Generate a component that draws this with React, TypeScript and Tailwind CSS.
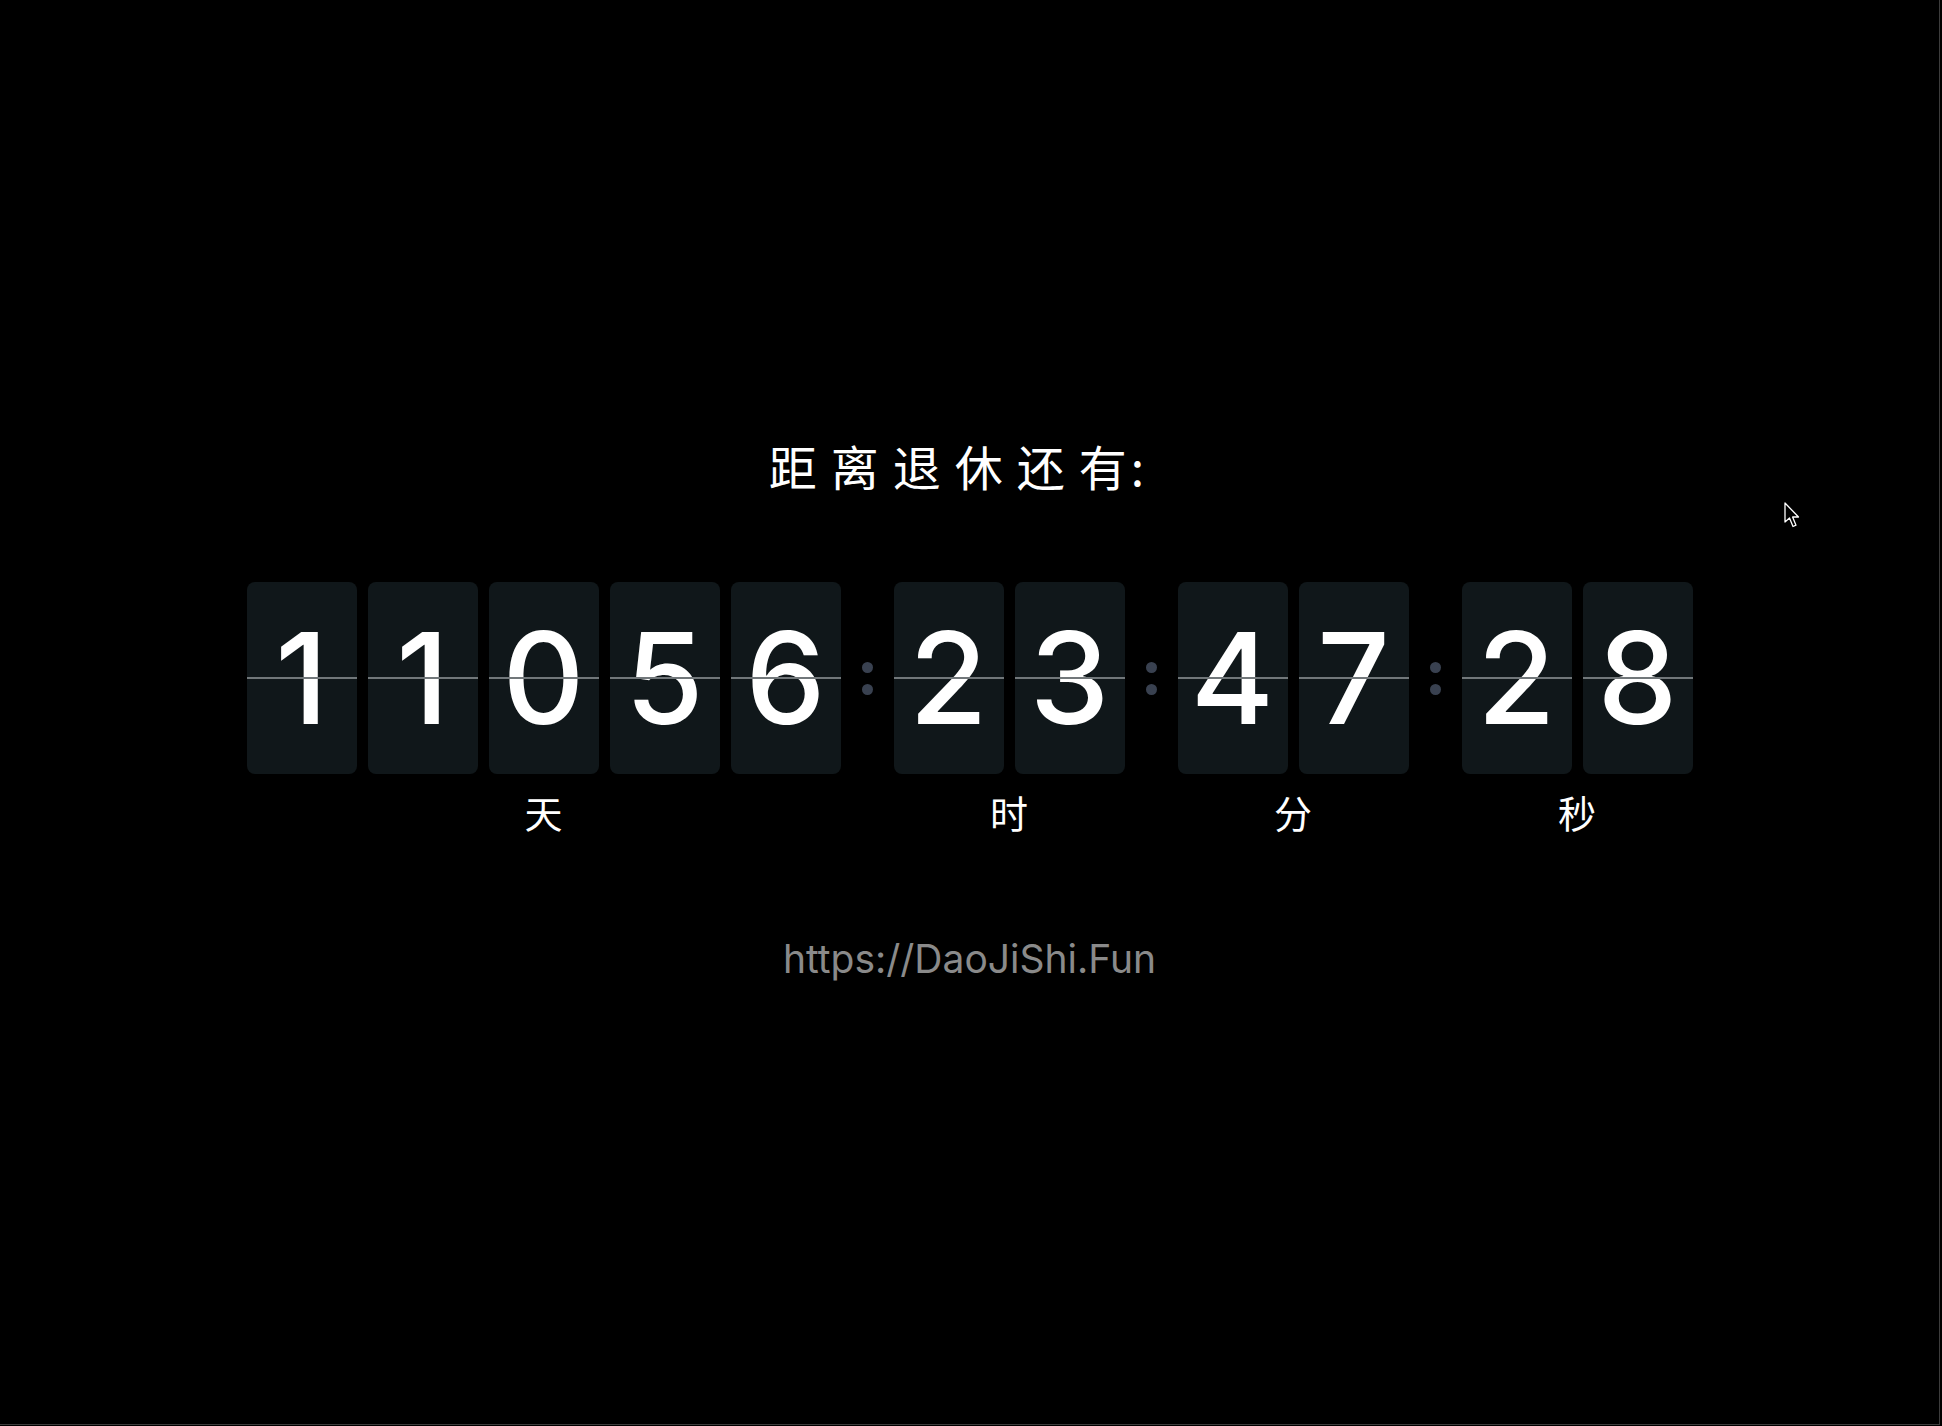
const groups = [
  { digits: ["1", "1", "0", "5", "6"], label: "天" },
  { digits: ["2", "3"], label: "时" },
  { digits: ["4", "7"], label: "分" },
  { digits: ["2", "8"], label: "秒" },
];

function FlipCard({ value }: { value: string }) {
  return (
    <div className="relative flex h-[192px] w-[110px] items-center justify-center rounded-lg bg-[#10171a]">
      <span className="font-['Inter',sans-serif] text-[127px] font-medium leading-none text-white">{value}</span>
      {/* fold line */}
      <div className="absolute left-0 right-0 top-[95px] h-[2px] bg-[#71777a]" />
    </div>
  );
}

function Colon() {
  return (
    <div className="flex h-[192px] w-[53px] flex-col items-center justify-center gap-[11px]">
      <div className="h-[11px] w-[11px] rounded-full bg-[#394150]" />
      <div className="h-[11px] w-[11px] rounded-full bg-[#394150]" />
    </div>
  );
}

function Cursor() {
  return (
    <svg className="absolute left-[1784px] top-[502px]" width="17" height="27" viewBox="0 0 17 27">
      <path d="M1 1 L1 20 L5.5 16 L9 24.5 L12 23.2 L8.6 15 L14.5 15 Z" fill="#000" stroke="#fff" strokeWidth="1.3" strokeLinejoin="round" />
    </svg>
  );
}

export default function App() {
  return (
    <div className="relative h-[1426px] w-full overflow-hidden bg-black">
      <div className="flex h-[1425px] w-[1940px] flex-col items-center border-b border-r border-[#3c3c3c] pt-[441px]">
        <h1 className="pr-[12px] font-['Noto_Sans_CJK_SC',sans-serif] text-[48px] font-normal leading-none tracking-[14px] text-white">
          距离退休还<span className="tracking-[4px]">有</span>:
        </h1>

        <div className="mt-[93px] flex items-start">
          {groups.map((g, i) => (
            <div key={g.label} className="flex items-start">
              {i > 0 && <Colon />}
              <div className="flex flex-col items-center">
                <div className="flex gap-[11px]">
                  {g.digits.map((d, j) => (
                    <FlipCard key={j} value={d} />
                  ))}
                </div>
                <div className="mt-[19px] font-['Noto_Sans_CJK_SC',sans-serif] text-[38px] leading-none text-white">
                  {g.label}
                </div>
              </div>
            </div>
          ))}
        </div>

        <div className="mt-[108px] font-['Inter',sans-serif] text-[39px] leading-none text-[#8a8a8a]">
          https://DaoJiShi.Fun
        </div>
      </div>
      <Cursor />
    </div>
  );
}
